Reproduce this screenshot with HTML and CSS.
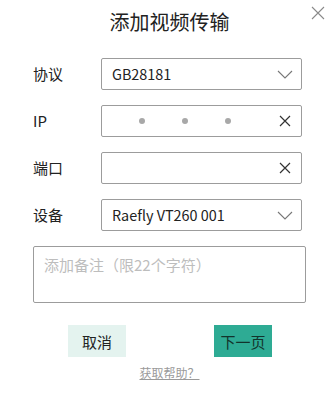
FILE: index.html
```html
<!DOCTYPE html>
<html lang="zh-CN">
<head>
    <meta charset="UTF-8">
    <meta name="viewport" content="width=device-width, initial-scale=1.0">
    <title>添加视频传输</title>
    <link rel="stylesheet" href="styles.css">
</head>
<body>
    <div class="dialog">
        <div class="header">
            <h1>添加视频传输</h1>
            <button class="close" aria-label="关闭">
                <svg width="14" height="14" viewBox="0 0 14 14"><path d="M1 1L13 13M13 1L1 13" stroke="#8a8a8a" stroke-width="1.1" fill="none"/></svg>
            </button>
        </div>

        <div class="form">
            <div class="row">
                <label>协议</label>
                <div class="field">
                    <span class="value">GB28181</span>
                    <svg class="chev" width="16" height="9" viewBox="0 0 16 9"><path d="M1 1L8 8L15 1" stroke="#777" stroke-width="1.1" fill="none"/></svg>
                </div>
            </div>
            <div class="row">
                <label>IP</label>
                <div class="field">
                    <div class="ip">
                        <span class="dot"></span>
                        <span class="dot"></span>
                        <span class="dot"></span>
                    </div>
                    <svg class="clear" width="12" height="12" viewBox="0 0 12 12"><path d="M1 1L11 11M11 1L1 11" stroke="#333" stroke-width="1.2" fill="none"/></svg>
                </div>
            </div>
            <div class="row">
                <label>端口</label>
                <div class="field">
                    <span class="value"></span>
                    <svg class="clear" width="12" height="12" viewBox="0 0 12 12"><path d="M1 1L11 11M11 1L1 11" stroke="#333" stroke-width="1.2" fill="none"/></svg>
                </div>
            </div>
            <div class="row">
                <label>设备</label>
                <div class="field">
                    <span class="value">Raefly VT260 001</span>
                    <svg class="chev" width="16" height="9" viewBox="0 0 16 9"><path d="M1 1L8 8L15 1" stroke="#777" stroke-width="1.1" fill="none"/></svg>
                </div>
            </div>
            <textarea class="note" placeholder="添加备注（限22个字符）"></textarea>
        </div>

        <div class="actions">
            <button class="btn cancel">取消</button>
            <button class="btn next">下一页</button>
        </div>
        <a class="help" href="#">获取帮助？</a>
    </div>
</body>
</html>
```

FILE: styles.css
```css
body {
    margin: 0;
    background-color: #fff;
    font-family: "Noto Sans CJK SC", "Noto Sans", sans-serif;
    color: #222;
}
.dialog {
    width: 329px;
    height: 401px;
    display: flex;
    flex-direction: column;
}
.header {
    position: relative;
    height: 44px;
    display: flex;
    align-items: center;
    justify-content: center;
    padding-left: 10px;
}
h1 {
    margin: 0;
    font-size: 20px;
    font-weight: 400;
    line-height: 24px;
    color: #222;
}
.close {
    position: absolute;
    top: 6px;
    right: 4px;
    padding: 0;
    border: none;
    background: none;
    display: flex;
}
.form {
    display: flex;
    flex-direction: column;
    gap: 15px;
    padding: 14px 23px 0 33px;
}
.row {
    display: flex;
    align-items: center;
}
.row label {
    width: 68px;
    font-size: 15px;
    line-height: 20px;
}
.field {
    width: 201px;
    height: 32px;
    box-sizing: border-box;
    border: 1px solid #9c9c9c;
    border-radius: 2px;
    display: flex;
    align-items: center;
    padding: 0 8px 0 10px;
}
.value {
    flex: 1;
    font-size: 14.4px;
    line-height: 20px;
    color: #222;
}
.ip {
    flex: 1;
    display: flex;
    gap: 37px;
    padding-left: 27px;
}
.dot {
    width: 6px;
    height: 6px;
    border-radius: 50%;
    background-color: #a8a8a8;
}
.clear {
    margin-right: 2px;
}
.note {
    width: 273px;
    height: 57px;
    box-sizing: border-box;
    margin: 0;
    border: 1px solid #9c9c9c;
    border-radius: 2px;
    padding: 6px 10px;
    font-family: inherit;
    font-size: 15px;
    line-height: 24px;
    resize: none;
}
.note::placeholder {
    color: #bdbdbd;
}
.actions {
    display: flex;
    gap: 88px;
    padding-left: 68px;
    margin-top: 22px;
}
.btn {
    width: 58px;
    height: 32px;
    border: none;
    padding: 0;
    font-family: inherit;
    font-size: 15px;
    color: #222;
}
.cancel {
    background-color: #e4f3ef;
}
.next {
    background-color: #2eab94;
    color: #12332c;
}
.help {
    align-self: center;
    margin-top: 8px;
    padding-left: 10px;
    font-size: 12px;
    line-height: 16px;
    color: #9a9a9a;
}
```
